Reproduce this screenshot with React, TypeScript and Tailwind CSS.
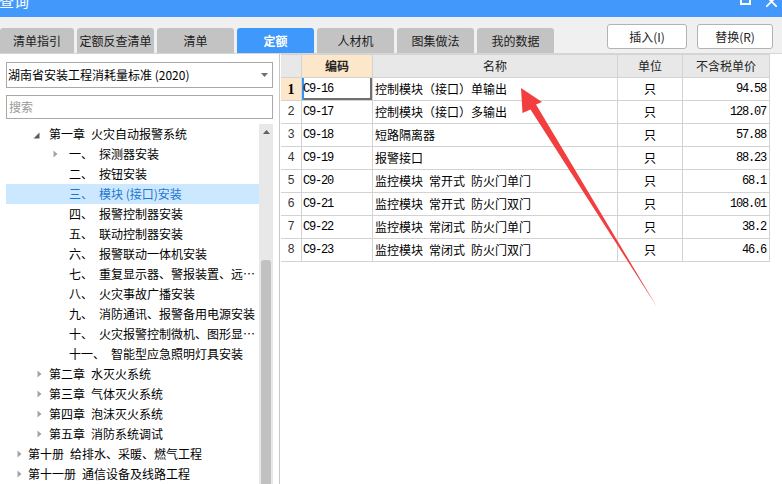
import React from 'react';

const rows: [string, string, string][] = [
  ['C9-16', '控制模块（接口）单输出', '94.58'],
  ['C9-17', '控制模块（接口）多输出', '128.07'],
  ['C9-18', '短路隔离器', '57.88'],
  ['C9-19', '报警接口', '88.23'],
  ['C9-20', '监控模块\u2002常开式\u2002防火门单门', '68.1'],
  ['C9-21', '监控模块\u2002常开式\u2002防火门双门', '108.01'],
  ['C9-22', '监控模块\u2002常闭式\u2002防火门单门', '38.2'],
  ['C9-23', '监控模块\u2002常闭式\u2002防火门双门', '46.6'],
];

type Item = {
  level: 'book' | 'chapter' | 'section';
  tri?: 'open' | 'closed';
  num?: string;
  text: string;
  selected?: boolean;
};

const tree: Item[] = [
  { level: 'chapter', tri: 'open', text: '第一章\u2002火灾自动报警系统' },
  { level: 'section', tri: 'closed', num: '一、', text: '探测器安装' },
  { level: 'section', num: '二、', text: '按钮安装' },
  { level: 'section', num: '三、', text: '模块 (接口)安装', selected: true },
  { level: 'section', num: '四、', text: '报警控制器安装' },
  { level: 'section', num: '五、', text: '联动控制器安装' },
  { level: 'section', num: '六、', text: '报警联动一体机安装' },
  { level: 'section', num: '七、', text: '重复显示器、警报装置、远…' },
  { level: 'section', num: '八、', text: '火灾事故广播安装' },
  { level: 'section', num: '九、', text: '消防通讯、报警备用电源安装' },
  { level: 'section', num: '十、', text: '火灾报警控制微机、图形显…' },
  { level: 'section', num: '十一、', text: '智能型应急照明灯具安装' },
  { level: 'chapter', tri: 'closed', text: '第二章\u2002水灭火系统' },
  { level: 'chapter', tri: 'closed', text: '第三章\u2002气体灭火系统' },
  { level: 'chapter', tri: 'closed', text: '第四章\u2002泡沫灭火系统' },
  { level: 'chapter', tri: 'closed', text: '第五章\u2002消防系统调试' },
  { level: 'book', tri: 'closed', text: '第十册\u2002给排水、采暖、燃气工程' },
  { level: 'book', tri: 'closed', text: '第十一册\u2002通信设备及线路工程' },
];

const tabs = ['清单指引', '定额反查清单', '清单', '定额', '人材机', '图集做法', '我的数据'];

function OpenTri() {
  return (
    <svg width="7" height="7" viewBox="0 0 7 7" className="mt-[2px]">
      <path d="M6.5 0.5V6.5H0.5Z" fill="#5c5c5c" />
    </svg>
  );
}

function ClosedTri() {
  return (
    <svg width="5" height="8" viewBox="0 0 5 8">
      <path d="M0.5 0.5L4.5 4L0.5 7.5Z" fill="#a3a3a3" />
    </svg>
  );
}

function TreeRow({ item }: { item: Item }) {
  const pad =
    item.level === 'book' ? 'pl-[6px]' : item.level === 'chapter' ? 'pl-[27px]' : 'pl-[47px]';
  const triMargin =
    item.level === 'book' ? 'pl-[5px]' : item.level === 'chapter' && item.tri === 'closed' ? 'pl-[4px]' : 'pl-0';
  return (
    <div
      className={`h-[20px] flex items-center whitespace-nowrap overflow-hidden text-[12px] leading-[20px] ${pad} ${
        item.selected ? 'bg-[#cce8ff] text-[#1f76d2]' : 'text-black'
      }`}
    >
      <div className={`w-[16px] shrink-0 flex items-center ${triMargin}`}>
        {item.tri === 'open' ? <OpenTri /> : item.tri === 'closed' ? <ClosedTri /> : null}
      </div>
      {item.num ? (
        <>
          <span>{item.num}</span>
          <span className="ml-[6px]">{item.text}</span>
        </>
      ) : (
        <span>{item.text}</span>
      )}
    </div>
  );
}

const cols = 'grid grid-cols-[21px_71px_245px_65px_87px]';
const cell = 'h-[23px] border-r border-b border-[#d3d3d3] flex items-center';
const mono = "font-['Liberation_Mono',monospace] tracking-[-1.2px] text-[12px]";

export default function App() {
  return (
    <div className="relative w-[782px] h-[484px] overflow-hidden bg-white font-['Noto_Sans_CJK_SC',sans-serif] text-[12px] text-black">
      {/* title bar */}
      <div className="h-[17px] bg-[#4299fb] flex justify-between overflow-hidden">
        <div className="text-white text-[15px] leading-[18px] -mt-[8px] -ml-[1px]">查询</div>
        <div className="flex items-start gap-[15px] pr-[5px]">
          <svg width="11" height="6" viewBox="0 0 11 6">
            <rect x="1" y="-6" width="9" height="10" fill="none" stroke="white" strokeWidth="2" />
          </svg>
          <svg width="11" height="7" viewBox="0 0 11 7">
            <path d="M0 -4L11 7M11 -4L0 7" stroke="white" strokeWidth="1.8" />
          </svg>
        </div>
      </div>

      {/* tab bar */}
      <div className="h-[37px] bg-[#f0f0f0] border-b border-[#d6d6d6] flex">
        <div className="flex items-end gap-[3px]">
          {tabs.map((t, i) => (
            <div
              key={t}
              className={`h-[25px] rounded-t-[3px] flex items-center justify-center text-[12px] ${
                i === 0 ? 'w-[74px]' : 'w-[77px]'
              } ${t === '定额' ? 'bg-[#3f98fb] text-white font-bold' : 'bg-[#c3c3c3] text-[#1c1c1c]'}`}
            >
              {t}
            </div>
          ))}
        </div>
        <div className="ml-auto flex gap-[10px] pt-[7px] pr-[9px]">
          <div className="w-[80px] h-[25px] bg-white border border-[#b3b3b3] rounded-[3px] flex items-center justify-center text-[12px] text-[#222]">
            插入(I)
          </div>
          <div className="w-[76px] h-[25px] bg-white border border-[#b3b3b3] rounded-[3px] flex items-center justify-center text-[12px] text-[#222]">
            替换(R)
          </div>
        </div>
      </div>

      {/* main */}
      <div className="h-[430px] flex">
        {/* left panel */}
        <div className="w-[280px] shrink-0 border-r border-[#c8c8c8] flex flex-col">
          <div className="pl-[6px] pr-[6px] pt-[8px]">
            <div className="h-[26px] border border-[#a9a9a9] bg-white flex items-center pl-[1px] pr-[4px]">
              <span className="text-[12px] whitespace-nowrap">湖南省安装工程消耗量标准 (2020)</span>
              <svg width="7" height="4" viewBox="0 0 7 4" className="ml-auto">
                <path d="M0 0H7L3.5 4Z" fill="#707070" />
              </svg>
            </div>
            <div className="mt-[7px] h-[24px] border border-[#a9a9a9] bg-white flex items-center pl-[2px]">
              <span className="text-[12px] text-[#9a9a9a]">搜索</span>
            </div>
          </div>
          <div className="mt-[5px] flex flex-1 min-h-0 pl-[6px]">
            <div className="w-[253px] overflow-hidden">
              {tree.map((it, i) => (
                <TreeRow key={i} item={it} />
              ))}
            </div>
            <div className="w-[14px] bg-[#e8e8e8] flex flex-col">
              <div className="h-[15px] flex items-center justify-center">
                <svg width="7" height="4" viewBox="0 0 7 4">
                  <path d="M0 4H7L3.5 0Z" fill="#606060" />
                </svg>
              </div>
              <div className="h-[121px]" />
              <div className="flex-1 mx-[2px] bg-[#c1c1c1] rounded-t-[3px]" />
            </div>
          </div>
        </div>

        {/* right panel: table */}
        <div className="flex-1 pl-[1px]">
          <div className={`${cols} border-t border-[#d3d3d3] w-[489px]`}>
            <div className={`${cell} bg-[#e8e8e8]`} />
            <div className={`${cell} bg-[#fde7cb] justify-center font-bold text-[#222]`}>编码</div>
            <div className={`${cell} bg-[#e8e8e8] justify-center text-[#222]`}>名称</div>
            <div className={`${cell} bg-[#e8e8e8] justify-center text-[#222]`}>单位</div>
            <div className={`${cell} bg-[#e8e8e8] justify-center text-[#222]`}>不含税单价</div>
          </div>
          {rows.map((r, i) => (
            <div key={r[0]} className={`${cols} w-[489px]`}>
              <div
                className={`${cell} justify-center ${
                  i === 0
                    ? "bg-[#fde7cb] font-['Liberation_Serif',serif] font-bold text-[14px]"
                    : "font-['Liberation_Mono',monospace] text-[12px] text-[#333]"
                }`}
              >
                {i + 1}
              </div>
              <div
                className={`${cell} pl-[1px] ${
                  i === 0 ? 'shadow-[inset_2px_0_0_#3d8ff2,inset_-2px_-2px_0_#6f6f6f]' : ''
                }`}
              >
                <span className={mono}>{r[0]}</span>
              </div>
              <div className={`${cell} pl-[2px] whitespace-nowrap`}>{r[1]}</div>
              <div className={`${cell} justify-center`}>只</div>
              <div className={`${cell} justify-end pr-[3px]`}>
                <span className={mono}>{r[2]}</span>
              </div>
            </div>
          ))}
        </div>
      </div>

      {/* red annotation arrow */}
      <svg
        className="absolute inset-0 pointer-events-none"
        width="782"
        height="484"
        viewBox="0 0 782 484"
      >
        <polygon points="521,88 542,102 536,104.5 657,307 530.5,109.5 522.5,113" fill="#f23e3e" />
      </svg>
    </div>
  );
}
